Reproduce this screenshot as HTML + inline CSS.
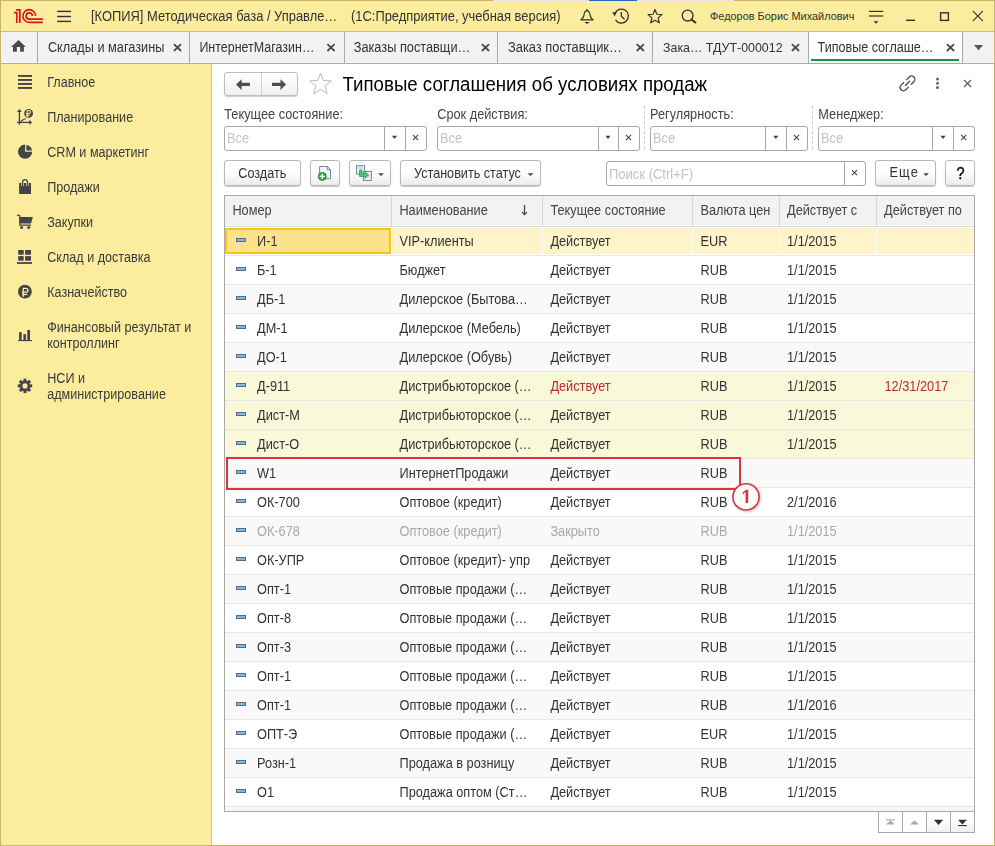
<!DOCTYPE html><html><head><meta charset="utf-8"><title>1C</title><style>
*{margin:0;padding:0;box-sizing:border-box}
html,body{width:995px;height:846px;overflow:hidden;background:#fff}
body{position:relative;font-family:"Liberation Sans",sans-serif}
.t{position:absolute;white-space:nowrap;line-height:1}
svg{position:absolute;overflow:visible}
</style></head><body><div style="position:absolute;left:0px;top:0px;width:995px;height:846px;background:#fbec9e"></div>
<div style="position:absolute;left:0px;top:0px;width:995px;height:1px;background:#c5b56b"></div>
<div style="position:absolute;left:493px;top:0px;width:241px;height:1px;background:#e3e3e3"></div>
<div style="position:absolute;left:589px;top:0px;width:48px;height:1px;background:#1a6cc4"></div>
<div style="position:absolute;left:0px;top:0px;width:1px;height:846px;background:#c5b56b"></div>
<div style="position:absolute;left:994px;top:0px;width:1px;height:846px;background:#c5b56b"></div>
<div style="position:absolute;left:0px;top:845px;width:995px;height:1px;background:#c5b56b"></div>
<div style="position:absolute;left:1px;top:31px;width:993px;height:1px;background:#cfbf72"></div>
<div style="position:absolute;left:1px;top:32px;width:993px;height:31px;background:#f2f2f2"></div>
<div style="position:absolute;left:1px;top:62px;width:993px;height:1px;background:#fafafa"></div>
<div style="position:absolute;left:1px;top:63px;width:993px;height:1px;background:#a9a9a9"></div>
<div style="position:absolute;left:37px;top:32px;width:1px;height:31px;background:#a9a9a9"></div>
<div style="position:absolute;left:189px;top:32px;width:1px;height:31px;background:#a9a9a9"></div>
<div style="position:absolute;left:344px;top:32px;width:1px;height:31px;background:#a9a9a9"></div>
<div style="position:absolute;left:497px;top:32px;width:1px;height:31px;background:#a9a9a9"></div>
<div style="position:absolute;left:652px;top:32px;width:1px;height:31px;background:#a9a9a9"></div>
<div style="position:absolute;left:808px;top:32px;width:1px;height:31px;background:#a9a9a9"></div>
<div style="position:absolute;left:962px;top:32px;width:1px;height:31px;background:#a9a9a9"></div>
<div style="position:absolute;left:809px;top:32px;width:153px;height:31px;background:#fff"></div>
<div style="position:absolute;left:811px;top:59px;width:148px;height:2px;background:#1a9641"></div>
<div style="position:absolute;left:1px;top:64px;width:210px;height:781px;background:#fbec9e"></div>
<div style="position:absolute;left:211px;top:64px;width:1px;height:781px;background:#d8c97e"></div>
<div style="position:absolute;left:212px;top:64px;width:782px;height:781px;background:#fff"></div>
<div class="t" style="left:91.00px;top:11.16px;font-size:12.92px;color:#333;transform:scaleY(1.1);transform-origin:0 10.94px;">[КОПИЯ] Методическая база / Управле…</div>
<div class="t" style="left:351.00px;top:11.16px;font-size:12.92px;color:#333;transform:scaleY(1.1);transform-origin:0 10.94px;">(1С:Предприятие, учебная версия)</div>
<div class="t" style="left:710.00px;top:10.95px;font-size:10.93px;color:#333;">Федоров Борис Михайлович</div>
<div class="t" style="left:47.90px;top:41.82px;font-size:12.74px;color:#333;transform:scaleY(1.1);transform-origin:0 10.78px;">Склады и магазины</div>
<div class="t" style="left:199.40px;top:42.04px;font-size:12.47px;color:#333;transform:scaleY(1.1);transform-origin:0 10.56px;">ИнтернетМагазин…</div>
<div class="t" style="left:353.70px;top:41.78px;font-size:12.78px;color:#333;transform:scaleY(1.1);transform-origin:0 10.82px;">Заказы поставщи…</div>
<div class="t" style="left:508.00px;top:41.71px;font-size:12.87px;color:#333;transform:scaleY(1.1);transform-origin:0 10.89px;">Заказ поставщик…</div>
<div class="t" style="left:663.00px;top:42.09px;font-size:12.41px;color:#333;transform:scaleY(1.1);transform-origin:0 10.51px;">Зака… ТДУТ-000012</div>
<div class="t" style="left:817.50px;top:41.94px;font-size:12.59px;color:#333;transform:scaleY(1.1);transform-origin:0 10.66px;">Типовые соглаше…</div>
<div class="t" style="left:47.20px;top:76.83px;font-size:12.6px;color:#3b3b3b;transform:scaleY(1.1);transform-origin:0 10.67px;">Главное</div>
<div class="t" style="left:47.20px;top:111.83px;font-size:12.6px;color:#3b3b3b;transform:scaleY(1.1);transform-origin:0 10.67px;">Планирование</div>
<div class="t" style="left:47.20px;top:146.83px;font-size:12.6px;color:#3b3b3b;transform:scaleY(1.1);transform-origin:0 10.67px;">CRM и маркетинг</div>
<div class="t" style="left:47.20px;top:181.83px;font-size:12.6px;color:#3b3b3b;transform:scaleY(1.1);transform-origin:0 10.67px;">Продажи</div>
<div class="t" style="left:47.20px;top:216.83px;font-size:12.6px;color:#3b3b3b;transform:scaleY(1.1);transform-origin:0 10.67px;">Закупки</div>
<div class="t" style="left:47.20px;top:251.83px;font-size:12.6px;color:#3b3b3b;transform:scaleY(1.1);transform-origin:0 10.67px;">Склад и доставка</div>
<div class="t" style="left:47.20px;top:286.83px;font-size:12.6px;color:#3b3b3b;transform:scaleY(1.1);transform-origin:0 10.67px;">Казначейство</div>
<div class="t" style="left:47.20px;top:322.23px;font-size:12.6px;color:#3b3b3b;transform:scaleY(1.1);transform-origin:0 10.67px;">Финансовый результат и</div>
<div class="t" style="left:47.20px;top:337.93px;font-size:12.6px;color:#3b3b3b;transform:scaleY(1.1);transform-origin:0 10.67px;">контроллинг</div>
<div class="t" style="left:47.20px;top:372.63px;font-size:12.6px;color:#3b3b3b;transform:scaleY(1.1);transform-origin:0 10.67px;">НСИ и</div>
<div class="t" style="left:47.20px;top:388.53px;font-size:12.6px;color:#3b3b3b;transform:scaleY(1.1);transform-origin:0 10.67px;">администрирование</div>
<div class="t" style="left:342.50px;top:75.70px;font-size:18.67px;color:#000;transform:scaleY(1.1);transform-origin:0 15.80px;">Типовые соглашения об условиях продаж</div>
<div class="t" style="left:224.30px;top:108.91px;font-size:12.75px;color:#444;transform:scaleY(1.1);transform-origin:0 10.79px;">Текущее состояние:</div>
<div class="t" style="left:437.20px;top:108.91px;font-size:12.75px;color:#444;transform:scaleY(1.1);transform-origin:0 10.79px;">Срок действия:</div>
<div class="t" style="left:650.00px;top:108.91px;font-size:12.75px;color:#444;transform:scaleY(1.1);transform-origin:0 10.79px;">Регулярность:</div>
<div class="t" style="left:818.30px;top:108.91px;font-size:12.75px;color:#444;transform:scaleY(1.1);transform-origin:0 10.79px;">Менеджер:</div>
<div style="position:absolute;left:224px;top:126px;width:203px;height:25px;background:#fff;border:1px solid #a8a8a8;border-radius:3px"></div>
<div style="position:absolute;left:384px;top:127px;width:1px;height:23px;background:#a8a8a8"></div>
<div style="position:absolute;left:405px;top:127px;width:1px;height:23px;background:#a8a8a8"></div>
<div class="t" style="left:227.00px;top:133.21px;font-size:12.75px;color:#c4c4c4;transform:scaleY(1.1);transform-origin:0 10.79px;">Все</div>
<div style="position:absolute;left:437px;top:126px;width:203px;height:25px;background:#fff;border:1px solid #a8a8a8;border-radius:3px"></div>
<div style="position:absolute;left:598px;top:127px;width:1px;height:23px;background:#a8a8a8"></div>
<div style="position:absolute;left:618px;top:127px;width:1px;height:23px;background:#a8a8a8"></div>
<div class="t" style="left:440.00px;top:133.21px;font-size:12.75px;color:#c4c4c4;transform:scaleY(1.1);transform-origin:0 10.79px;">Все</div>
<div style="position:absolute;left:650px;top:126px;width:158px;height:25px;background:#fff;border:1px solid #a8a8a8;border-radius:3px"></div>
<div style="position:absolute;left:765px;top:127px;width:1px;height:23px;background:#a8a8a8"></div>
<div style="position:absolute;left:786px;top:127px;width:1px;height:23px;background:#a8a8a8"></div>
<div class="t" style="left:653.00px;top:133.21px;font-size:12.75px;color:#c4c4c4;transform:scaleY(1.1);transform-origin:0 10.79px;">Все</div>
<div style="position:absolute;left:818px;top:126px;width:157px;height:25px;background:#fff;border:1px solid #a8a8a8;border-radius:3px"></div>
<div style="position:absolute;left:932px;top:127px;width:1px;height:23px;background:#a8a8a8"></div>
<div style="position:absolute;left:953px;top:127px;width:1px;height:23px;background:#a8a8a8"></div>
<div class="t" style="left:821.00px;top:133.21px;font-size:12.75px;color:#c4c4c4;transform:scaleY(1.1);transform-origin:0 10.79px;">Все</div>
<div style="position:absolute;left:644px;top:106px;width:1px;height:45px;background:repeating-linear-gradient(to bottom,#cdcdcd 0 3px,transparent 3px 5px)"></div>
<div style="position:absolute;left:812px;top:106px;width:1px;height:45px;background:repeating-linear-gradient(to bottom,#cdcdcd 0 3px,transparent 3px 5px)"></div>
<div style="position:absolute;left:224px;top:160px;width:77px;height:26px;background:linear-gradient(#fff 45%,#ececec);border:1px solid #b8b8b8;border-radius:3px;box-shadow:0 1px 1px rgba(0,0,0,.22)"></div>
<div class="t" style="left:238.30px;top:167.68px;font-size:12.66px;color:#333;transform:scaleY(1.1);transform-origin:0 10.72px;">Создать</div>
<div style="position:absolute;left:310px;top:160px;width:30px;height:26px;background:linear-gradient(#fff 45%,#ececec);border:1px solid #b8b8b8;border-radius:3px;box-shadow:0 1px 1px rgba(0,0,0,.22)"></div>
<div style="position:absolute;left:349px;top:160px;width:42px;height:26px;background:linear-gradient(#fff 45%,#ececec);border:1px solid #b8b8b8;border-radius:3px;box-shadow:0 1px 1px rgba(0,0,0,.22)"></div>
<div style="position:absolute;left:400px;top:160px;width:141px;height:26px;background:linear-gradient(#fff 45%,#ececec);border:1px solid #b8b8b8;border-radius:3px;box-shadow:0 1px 1px rgba(0,0,0,.22)"></div>
<div class="t" style="left:414.00px;top:167.70px;font-size:12.64px;color:#333;transform:scaleY(1.1);transform-origin:0 10.70px;">Установить статус</div>
<div style="position:absolute;left:606px;top:161px;width:260px;height:25px;background:#fff;border:1px solid #a8a8a8;border-radius:3px"></div>
<div style="position:absolute;left:844px;top:162px;width:1px;height:23px;background:#a8a8a8"></div>
<div class="t" style="left:609.00px;top:167.80px;font-size:13px;color:#c4c4c4;transform:scaleY(1.1);transform-origin:0 11.00px;">Поиск (Ctrl+F)</div>
<div style="position:absolute;left:875px;top:160px;width:61px;height:26px;background:linear-gradient(#fff 45%,#ececec);border:1px solid #b8b8b8;border-radius:3px;box-shadow:0 1px 1px rgba(0,0,0,.22)"></div>
<div class="t" style="left:889.40px;top:167.48px;font-size:12.9px;color:#333;transform:scaleY(1.1);transform-origin:0 10.92px;letter-spacing:1.1px">Еще</div>
<div style="position:absolute;left:945px;top:160px;width:30px;height:26px;background:linear-gradient(#fff 45%,#ececec);border:1px solid #b8b8b8;border-radius:3px;box-shadow:0 1px 1px rgba(0,0,0,.22)"></div>
<div class="t" style="left:956.40px;top:166.93px;font-size:14.5px;color:#111;transform:scaleY(1.1);transform-origin:0 12.27px;-webkit-text-stroke:0.45px #111">?</div>
<div style="position:absolute;left:224px;top:72px;width:74px;height:24px;background:linear-gradient(#fff,#f1f1f1);border:1px solid #bdbdbd;border-radius:3px;box-shadow:0 1px 1px rgba(0,0,0,.2)"></div>
<div style="position:absolute;left:261px;top:73px;width:1px;height:22px;background:#d0d0d0"></div>
<div style="position:absolute;left:224px;top:195px;width:751px;height:617px;background:#fff;border:1px solid #a9a9a9"></div>
<div style="position:absolute;left:225px;top:196px;width:749px;height:30px;background:#f2f2f2"></div>
<div style="position:absolute;left:225px;top:225px;width:749px;height:1px;background:#fafafa"></div>
<div style="position:absolute;left:225px;top:226px;width:749px;height:1px;background:#d8d8d8"></div>
<div style="position:absolute;left:391px;top:196px;width:1px;height:30px;background:#d6d6d6"></div>
<div style="position:absolute;left:542px;top:196px;width:1px;height:30px;background:#d6d6d6"></div>
<div style="position:absolute;left:692px;top:196px;width:1px;height:30px;background:#d6d6d6"></div>
<div style="position:absolute;left:779px;top:196px;width:1px;height:30px;background:#d6d6d6"></div>
<div style="position:absolute;left:876px;top:196px;width:1px;height:30px;background:#d6d6d6"></div>
<div class="t" style="left:232.40px;top:204.81px;font-size:12.75px;color:#444;transform:scaleY(1.1);transform-origin:0 10.79px;">Номер</div>
<div class="t" style="left:399.40px;top:204.81px;font-size:12.75px;color:#444;transform:scaleY(1.1);transform-origin:0 10.79px;">Наименование</div>
<div class="t" style="left:550.40px;top:204.81px;font-size:12.75px;color:#444;transform:scaleY(1.1);transform-origin:0 10.79px;">Текущее состояние</div>
<div class="t" style="left:700.40px;top:204.81px;font-size:12.75px;color:#444;transform:scaleY(1.1);transform-origin:0 10.79px;">Валюта цен</div>
<div class="t" style="left:787.00px;top:204.81px;font-size:12.75px;color:#444;transform:scaleY(1.1);transform-origin:0 10.79px;">Действует с</div>
<div class="t" style="left:884.10px;top:204.81px;font-size:12.75px;color:#444;transform:scaleY(1.1);transform-origin:0 10.79px;">Действует по</div>
<div style="position:absolute;left:225px;top:228px;width:749px;height:26px;background:#fff3c9"></div>
<div style="position:absolute;left:225px;top:255px;width:749px;height:1px;background:#e6e6e6"></div>
<div style="position:absolute;left:225px;top:228px;width:166px;height:26px;background:#fde28e;border:2px solid #fac611"></div>
<div style="position:absolute;left:391px;top:227px;width:1px;height:28px;background:#fff"></div>
<div style="position:absolute;left:542px;top:227px;width:1px;height:28px;background:#fff"></div>
<div style="position:absolute;left:692px;top:227px;width:1px;height:28px;background:#fff"></div>
<div style="position:absolute;left:779px;top:227px;width:1px;height:28px;background:#fff"></div>
<div style="position:absolute;left:876px;top:227px;width:1px;height:28px;background:#fff"></div>
<div style="position:absolute;left:236px;top:238px;width:10px;height:4px;background:#8db4dc;border:1px solid #4d6f8f"></div>
<div class="t" style="left:257.00px;top:235.81px;font-size:12.75px;color:#333;transform:scaleY(1.1);transform-origin:0 10.79px;">И-1</div>
<div class="t" style="left:399.50px;top:235.81px;font-size:12.75px;color:#333;transform:scaleY(1.1);transform-origin:0 10.79px;">VIP-клиенты</div>
<div class="t" style="left:550.40px;top:235.81px;font-size:12.75px;color:#333;transform:scaleY(1.1);transform-origin:0 10.79px;">Действует</div>
<div class="t" style="left:700.50px;top:235.81px;font-size:12.75px;color:#333;transform:scaleY(1.1);transform-origin:0 10.79px;">EUR</div>
<div class="t" style="left:787.00px;top:235.81px;font-size:12.75px;color:#333;transform:scaleY(1.1);transform-origin:0 10.79px;">1/1/2015</div>
<div style="position:absolute;left:225px;top:256px;width:749px;height:28px;background:#fff"></div>
<div style="position:absolute;left:225px;top:284px;width:749px;height:1px;background:#e6e6e6"></div>
<div style="position:absolute;left:236px;top:267px;width:10px;height:4px;background:#8db4dc;border:1px solid #4d6f8f"></div>
<div class="t" style="left:257.00px;top:264.81px;font-size:12.75px;color:#333;transform:scaleY(1.1);transform-origin:0 10.79px;">Б-1</div>
<div class="t" style="left:399.50px;top:264.81px;font-size:12.75px;color:#333;transform:scaleY(1.1);transform-origin:0 10.79px;">Бюджет</div>
<div class="t" style="left:550.40px;top:264.81px;font-size:12.75px;color:#333;transform:scaleY(1.1);transform-origin:0 10.79px;">Действует</div>
<div class="t" style="left:700.50px;top:264.81px;font-size:12.75px;color:#333;transform:scaleY(1.1);transform-origin:0 10.79px;">RUB</div>
<div class="t" style="left:787.00px;top:264.81px;font-size:12.75px;color:#333;transform:scaleY(1.1);transform-origin:0 10.79px;">1/1/2015</div>
<div style="position:absolute;left:225px;top:285px;width:749px;height:28px;background:#f9f9f9"></div>
<div style="position:absolute;left:225px;top:313px;width:749px;height:1px;background:#e6e6e6"></div>
<div style="position:absolute;left:236px;top:296px;width:10px;height:4px;background:#8db4dc;border:1px solid #4d6f8f"></div>
<div class="t" style="left:257.00px;top:293.81px;font-size:12.75px;color:#333;transform:scaleY(1.1);transform-origin:0 10.79px;">ДБ-1</div>
<div class="t" style="left:399.50px;top:293.81px;font-size:12.75px;color:#333;transform:scaleY(1.1);transform-origin:0 10.79px;">Дилерское (Бытова…</div>
<div class="t" style="left:550.40px;top:293.81px;font-size:12.75px;color:#333;transform:scaleY(1.1);transform-origin:0 10.79px;">Действует</div>
<div class="t" style="left:700.50px;top:293.81px;font-size:12.75px;color:#333;transform:scaleY(1.1);transform-origin:0 10.79px;">RUB</div>
<div class="t" style="left:787.00px;top:293.81px;font-size:12.75px;color:#333;transform:scaleY(1.1);transform-origin:0 10.79px;">1/1/2015</div>
<div style="position:absolute;left:225px;top:314px;width:749px;height:28px;background:#fff"></div>
<div style="position:absolute;left:225px;top:342px;width:749px;height:1px;background:#e6e6e6"></div>
<div style="position:absolute;left:236px;top:325px;width:10px;height:4px;background:#8db4dc;border:1px solid #4d6f8f"></div>
<div class="t" style="left:257.00px;top:322.81px;font-size:12.75px;color:#333;transform:scaleY(1.1);transform-origin:0 10.79px;">ДМ-1</div>
<div class="t" style="left:399.50px;top:322.81px;font-size:12.75px;color:#333;transform:scaleY(1.1);transform-origin:0 10.79px;">Дилерское (Мебель)</div>
<div class="t" style="left:550.40px;top:322.81px;font-size:12.75px;color:#333;transform:scaleY(1.1);transform-origin:0 10.79px;">Действует</div>
<div class="t" style="left:700.50px;top:322.81px;font-size:12.75px;color:#333;transform:scaleY(1.1);transform-origin:0 10.79px;">RUB</div>
<div class="t" style="left:787.00px;top:322.81px;font-size:12.75px;color:#333;transform:scaleY(1.1);transform-origin:0 10.79px;">1/1/2015</div>
<div style="position:absolute;left:225px;top:343px;width:749px;height:28px;background:#f9f9f9"></div>
<div style="position:absolute;left:225px;top:371px;width:749px;height:1px;background:#e6e6e6"></div>
<div style="position:absolute;left:236px;top:354px;width:10px;height:4px;background:#8db4dc;border:1px solid #4d6f8f"></div>
<div class="t" style="left:257.00px;top:351.81px;font-size:12.75px;color:#333;transform:scaleY(1.1);transform-origin:0 10.79px;">ДО-1</div>
<div class="t" style="left:399.50px;top:351.81px;font-size:12.75px;color:#333;transform:scaleY(1.1);transform-origin:0 10.79px;">Дилерское (Обувь)</div>
<div class="t" style="left:550.40px;top:351.81px;font-size:12.75px;color:#333;transform:scaleY(1.1);transform-origin:0 10.79px;">Действует</div>
<div class="t" style="left:700.50px;top:351.81px;font-size:12.75px;color:#333;transform:scaleY(1.1);transform-origin:0 10.79px;">RUB</div>
<div class="t" style="left:787.00px;top:351.81px;font-size:12.75px;color:#333;transform:scaleY(1.1);transform-origin:0 10.79px;">1/1/2015</div>
<div style="position:absolute;left:225px;top:372px;width:749px;height:28px;background:#f9f8d9"></div>
<div style="position:absolute;left:225px;top:400px;width:749px;height:1px;background:#e6e6e6"></div>
<div style="position:absolute;left:236px;top:383px;width:10px;height:4px;background:#8db4dc;border:1px solid #4d6f8f"></div>
<div class="t" style="left:257.00px;top:380.81px;font-size:12.75px;color:#333;transform:scaleY(1.1);transform-origin:0 10.79px;">Д-911</div>
<div class="t" style="left:399.50px;top:380.81px;font-size:12.75px;color:#333;transform:scaleY(1.1);transform-origin:0 10.79px;">Дистрибьюторское (…</div>
<div class="t" style="left:550.40px;top:380.81px;font-size:12.75px;color:#c0282d;transform:scaleY(1.1);transform-origin:0 10.79px;">Действует</div>
<div class="t" style="left:700.50px;top:380.81px;font-size:12.75px;color:#333;transform:scaleY(1.1);transform-origin:0 10.79px;">RUB</div>
<div class="t" style="left:787.00px;top:380.81px;font-size:12.75px;color:#333;transform:scaleY(1.1);transform-origin:0 10.79px;">1/1/2015</div>
<div class="t" style="left:884.50px;top:380.81px;font-size:12.75px;color:#c0282d;transform:scaleY(1.1);transform-origin:0 10.79px;">12/31/2017</div>
<div style="position:absolute;left:225px;top:401px;width:749px;height:28px;background:#f9f8d9"></div>
<div style="position:absolute;left:225px;top:429px;width:749px;height:1px;background:#e6e6e6"></div>
<div style="position:absolute;left:236px;top:412px;width:10px;height:4px;background:#8db4dc;border:1px solid #4d6f8f"></div>
<div class="t" style="left:257.00px;top:409.81px;font-size:12.75px;color:#333;transform:scaleY(1.1);transform-origin:0 10.79px;">Дист-М</div>
<div class="t" style="left:399.50px;top:409.81px;font-size:12.75px;color:#333;transform:scaleY(1.1);transform-origin:0 10.79px;">Дистрибьюторское (…</div>
<div class="t" style="left:550.40px;top:409.81px;font-size:12.75px;color:#333;transform:scaleY(1.1);transform-origin:0 10.79px;">Действует</div>
<div class="t" style="left:700.50px;top:409.81px;font-size:12.75px;color:#333;transform:scaleY(1.1);transform-origin:0 10.79px;">RUB</div>
<div class="t" style="left:787.00px;top:409.81px;font-size:12.75px;color:#333;transform:scaleY(1.1);transform-origin:0 10.79px;">1/1/2015</div>
<div style="position:absolute;left:225px;top:430px;width:749px;height:28px;background:#f9f8d9"></div>
<div style="position:absolute;left:225px;top:458px;width:749px;height:1px;background:#e6e6e6"></div>
<div style="position:absolute;left:236px;top:441px;width:10px;height:4px;background:#8db4dc;border:1px solid #4d6f8f"></div>
<div class="t" style="left:257.00px;top:438.81px;font-size:12.75px;color:#333;transform:scaleY(1.1);transform-origin:0 10.79px;">Дист-О</div>
<div class="t" style="left:399.50px;top:438.81px;font-size:12.75px;color:#333;transform:scaleY(1.1);transform-origin:0 10.79px;">Дистрибьюторское (…</div>
<div class="t" style="left:550.40px;top:438.81px;font-size:12.75px;color:#333;transform:scaleY(1.1);transform-origin:0 10.79px;">Действует</div>
<div class="t" style="left:700.50px;top:438.81px;font-size:12.75px;color:#333;transform:scaleY(1.1);transform-origin:0 10.79px;">RUB</div>
<div class="t" style="left:787.00px;top:438.81px;font-size:12.75px;color:#333;transform:scaleY(1.1);transform-origin:0 10.79px;">1/1/2015</div>
<div style="position:absolute;left:225px;top:459px;width:749px;height:28px;background:#f9f9f9"></div>
<div style="position:absolute;left:225px;top:487px;width:749px;height:1px;background:#e6e6e6"></div>
<div style="position:absolute;left:236px;top:470px;width:10px;height:4px;background:#8db4dc;border:1px solid #4d6f8f"></div>
<div class="t" style="left:257.00px;top:467.81px;font-size:12.75px;color:#333;transform:scaleY(1.1);transform-origin:0 10.79px;">W1</div>
<div class="t" style="left:399.50px;top:467.81px;font-size:12.75px;color:#333;transform:scaleY(1.1);transform-origin:0 10.79px;">ИнтернетПродажи</div>
<div class="t" style="left:550.40px;top:467.81px;font-size:12.75px;color:#333;transform:scaleY(1.1);transform-origin:0 10.79px;">Действует</div>
<div class="t" style="left:700.50px;top:467.81px;font-size:12.75px;color:#333;transform:scaleY(1.1);transform-origin:0 10.79px;">RUB</div>
<div style="position:absolute;left:225px;top:488px;width:749px;height:28px;background:#fff"></div>
<div style="position:absolute;left:225px;top:516px;width:749px;height:1px;background:#e6e6e6"></div>
<div style="position:absolute;left:236px;top:499px;width:10px;height:4px;background:#8db4dc;border:1px solid #4d6f8f"></div>
<div class="t" style="left:257.00px;top:496.81px;font-size:12.75px;color:#333;transform:scaleY(1.1);transform-origin:0 10.79px;">ОК-700</div>
<div class="t" style="left:399.50px;top:496.81px;font-size:12.75px;color:#333;transform:scaleY(1.1);transform-origin:0 10.79px;">Оптовое (кредит)</div>
<div class="t" style="left:550.40px;top:496.81px;font-size:12.75px;color:#333;transform:scaleY(1.1);transform-origin:0 10.79px;">Действует</div>
<div class="t" style="left:700.50px;top:496.81px;font-size:12.75px;color:#333;transform:scaleY(1.1);transform-origin:0 10.79px;">RUB</div>
<div class="t" style="left:787.00px;top:496.81px;font-size:12.75px;color:#333;transform:scaleY(1.1);transform-origin:0 10.79px;">2/1/2016</div>
<div style="position:absolute;left:225px;top:517px;width:749px;height:28px;background:#f9f9f9"></div>
<div style="position:absolute;left:225px;top:545px;width:749px;height:1px;background:#e6e6e6"></div>
<div style="position:absolute;left:236px;top:528px;width:10px;height:4px;background:#8db4dc;border:1px solid #4d6f8f"></div>
<div class="t" style="left:257.00px;top:525.81px;font-size:12.75px;color:#a8a8a8;transform:scaleY(1.1);transform-origin:0 10.79px;">ОК-678</div>
<div class="t" style="left:399.50px;top:525.81px;font-size:12.75px;color:#a8a8a8;transform:scaleY(1.1);transform-origin:0 10.79px;">Оптовое (кредит)</div>
<div class="t" style="left:550.40px;top:525.81px;font-size:12.75px;color:#a8a8a8;transform:scaleY(1.1);transform-origin:0 10.79px;">Закрыто</div>
<div class="t" style="left:700.50px;top:525.81px;font-size:12.75px;color:#a8a8a8;transform:scaleY(1.1);transform-origin:0 10.79px;">RUB</div>
<div class="t" style="left:787.00px;top:525.81px;font-size:12.75px;color:#a8a8a8;transform:scaleY(1.1);transform-origin:0 10.79px;">1/1/2015</div>
<div style="position:absolute;left:225px;top:546px;width:749px;height:28px;background:#fff"></div>
<div style="position:absolute;left:225px;top:574px;width:749px;height:1px;background:#e6e6e6"></div>
<div style="position:absolute;left:236px;top:557px;width:10px;height:4px;background:#8db4dc;border:1px solid #4d6f8f"></div>
<div class="t" style="left:257.00px;top:554.81px;font-size:12.75px;color:#333;transform:scaleY(1.1);transform-origin:0 10.79px;">ОК-УПР</div>
<div class="t" style="left:399.50px;top:554.81px;font-size:12.75px;color:#333;transform:scaleY(1.1);transform-origin:0 10.79px;">Оптовое (кредит)- упр</div>
<div class="t" style="left:550.40px;top:554.81px;font-size:12.75px;color:#333;transform:scaleY(1.1);transform-origin:0 10.79px;">Действует</div>
<div class="t" style="left:700.50px;top:554.81px;font-size:12.75px;color:#333;transform:scaleY(1.1);transform-origin:0 10.79px;">RUB</div>
<div class="t" style="left:787.00px;top:554.81px;font-size:12.75px;color:#333;transform:scaleY(1.1);transform-origin:0 10.79px;">1/1/2015</div>
<div style="position:absolute;left:225px;top:575px;width:749px;height:28px;background:#f9f9f9"></div>
<div style="position:absolute;left:225px;top:603px;width:749px;height:1px;background:#e6e6e6"></div>
<div style="position:absolute;left:236px;top:586px;width:10px;height:4px;background:#8db4dc;border:1px solid #4d6f8f"></div>
<div class="t" style="left:257.00px;top:583.81px;font-size:12.75px;color:#333;transform:scaleY(1.1);transform-origin:0 10.79px;">Опт-1</div>
<div class="t" style="left:399.50px;top:583.81px;font-size:12.75px;color:#333;transform:scaleY(1.1);transform-origin:0 10.79px;">Оптовые продажи (…</div>
<div class="t" style="left:550.40px;top:583.81px;font-size:12.75px;color:#333;transform:scaleY(1.1);transform-origin:0 10.79px;">Действует</div>
<div class="t" style="left:700.50px;top:583.81px;font-size:12.75px;color:#333;transform:scaleY(1.1);transform-origin:0 10.79px;">RUB</div>
<div class="t" style="left:787.00px;top:583.81px;font-size:12.75px;color:#333;transform:scaleY(1.1);transform-origin:0 10.79px;">1/1/2015</div>
<div style="position:absolute;left:225px;top:604px;width:749px;height:28px;background:#fff"></div>
<div style="position:absolute;left:225px;top:632px;width:749px;height:1px;background:#e6e6e6"></div>
<div style="position:absolute;left:236px;top:615px;width:10px;height:4px;background:#8db4dc;border:1px solid #4d6f8f"></div>
<div class="t" style="left:257.00px;top:612.81px;font-size:12.75px;color:#333;transform:scaleY(1.1);transform-origin:0 10.79px;">Опт-8</div>
<div class="t" style="left:399.50px;top:612.81px;font-size:12.75px;color:#333;transform:scaleY(1.1);transform-origin:0 10.79px;">Оптовые продажи (…</div>
<div class="t" style="left:550.40px;top:612.81px;font-size:12.75px;color:#333;transform:scaleY(1.1);transform-origin:0 10.79px;">Действует</div>
<div class="t" style="left:700.50px;top:612.81px;font-size:12.75px;color:#333;transform:scaleY(1.1);transform-origin:0 10.79px;">RUB</div>
<div class="t" style="left:787.00px;top:612.81px;font-size:12.75px;color:#333;transform:scaleY(1.1);transform-origin:0 10.79px;">1/1/2015</div>
<div style="position:absolute;left:225px;top:633px;width:749px;height:28px;background:#f9f9f9"></div>
<div style="position:absolute;left:225px;top:661px;width:749px;height:1px;background:#e6e6e6"></div>
<div style="position:absolute;left:236px;top:644px;width:10px;height:4px;background:#8db4dc;border:1px solid #4d6f8f"></div>
<div class="t" style="left:257.00px;top:641.81px;font-size:12.75px;color:#333;transform:scaleY(1.1);transform-origin:0 10.79px;">Опт-3</div>
<div class="t" style="left:399.50px;top:641.81px;font-size:12.75px;color:#333;transform:scaleY(1.1);transform-origin:0 10.79px;">Оптовые продажи (…</div>
<div class="t" style="left:550.40px;top:641.81px;font-size:12.75px;color:#333;transform:scaleY(1.1);transform-origin:0 10.79px;">Действует</div>
<div class="t" style="left:700.50px;top:641.81px;font-size:12.75px;color:#333;transform:scaleY(1.1);transform-origin:0 10.79px;">RUB</div>
<div class="t" style="left:787.00px;top:641.81px;font-size:12.75px;color:#333;transform:scaleY(1.1);transform-origin:0 10.79px;">1/1/2015</div>
<div style="position:absolute;left:225px;top:662px;width:749px;height:28px;background:#fff"></div>
<div style="position:absolute;left:225px;top:690px;width:749px;height:1px;background:#e6e6e6"></div>
<div style="position:absolute;left:236px;top:673px;width:10px;height:4px;background:#8db4dc;border:1px solid #4d6f8f"></div>
<div class="t" style="left:257.00px;top:670.81px;font-size:12.75px;color:#333;transform:scaleY(1.1);transform-origin:0 10.79px;">Опт-1</div>
<div class="t" style="left:399.50px;top:670.81px;font-size:12.75px;color:#333;transform:scaleY(1.1);transform-origin:0 10.79px;">Оптовые продажи (…</div>
<div class="t" style="left:550.40px;top:670.81px;font-size:12.75px;color:#333;transform:scaleY(1.1);transform-origin:0 10.79px;">Действует</div>
<div class="t" style="left:700.50px;top:670.81px;font-size:12.75px;color:#333;transform:scaleY(1.1);transform-origin:0 10.79px;">RUB</div>
<div class="t" style="left:787.00px;top:670.81px;font-size:12.75px;color:#333;transform:scaleY(1.1);transform-origin:0 10.79px;">1/1/2015</div>
<div style="position:absolute;left:225px;top:691px;width:749px;height:28px;background:#f9f9f9"></div>
<div style="position:absolute;left:225px;top:719px;width:749px;height:1px;background:#e6e6e6"></div>
<div style="position:absolute;left:236px;top:702px;width:10px;height:4px;background:#8db4dc;border:1px solid #4d6f8f"></div>
<div class="t" style="left:257.00px;top:699.81px;font-size:12.75px;color:#333;transform:scaleY(1.1);transform-origin:0 10.79px;">Опт-1</div>
<div class="t" style="left:399.50px;top:699.81px;font-size:12.75px;color:#333;transform:scaleY(1.1);transform-origin:0 10.79px;">Оптовые продажи (…</div>
<div class="t" style="left:550.40px;top:699.81px;font-size:12.75px;color:#333;transform:scaleY(1.1);transform-origin:0 10.79px;">Действует</div>
<div class="t" style="left:700.50px;top:699.81px;font-size:12.75px;color:#333;transform:scaleY(1.1);transform-origin:0 10.79px;">RUB</div>
<div class="t" style="left:787.00px;top:699.81px;font-size:12.75px;color:#333;transform:scaleY(1.1);transform-origin:0 10.79px;">1/1/2016</div>
<div style="position:absolute;left:225px;top:720px;width:749px;height:28px;background:#fff"></div>
<div style="position:absolute;left:225px;top:748px;width:749px;height:1px;background:#e6e6e6"></div>
<div style="position:absolute;left:236px;top:731px;width:10px;height:4px;background:#8db4dc;border:1px solid #4d6f8f"></div>
<div class="t" style="left:257.00px;top:728.81px;font-size:12.75px;color:#333;transform:scaleY(1.1);transform-origin:0 10.79px;">ОПТ-Э</div>
<div class="t" style="left:399.50px;top:728.81px;font-size:12.75px;color:#333;transform:scaleY(1.1);transform-origin:0 10.79px;">Оптовые продажи (…</div>
<div class="t" style="left:550.40px;top:728.81px;font-size:12.75px;color:#333;transform:scaleY(1.1);transform-origin:0 10.79px;">Действует</div>
<div class="t" style="left:700.50px;top:728.81px;font-size:12.75px;color:#333;transform:scaleY(1.1);transform-origin:0 10.79px;">EUR</div>
<div class="t" style="left:787.00px;top:728.81px;font-size:12.75px;color:#333;transform:scaleY(1.1);transform-origin:0 10.79px;">1/1/2015</div>
<div style="position:absolute;left:225px;top:749px;width:749px;height:28px;background:#f9f9f9"></div>
<div style="position:absolute;left:225px;top:777px;width:749px;height:1px;background:#e6e6e6"></div>
<div style="position:absolute;left:236px;top:760px;width:10px;height:4px;background:#8db4dc;border:1px solid #4d6f8f"></div>
<div class="t" style="left:257.00px;top:757.81px;font-size:12.75px;color:#333;transform:scaleY(1.1);transform-origin:0 10.79px;">Розн-1</div>
<div class="t" style="left:399.50px;top:757.81px;font-size:12.75px;color:#333;transform:scaleY(1.1);transform-origin:0 10.79px;">Продажа в розницу</div>
<div class="t" style="left:550.40px;top:757.81px;font-size:12.75px;color:#333;transform:scaleY(1.1);transform-origin:0 10.79px;">Действует</div>
<div class="t" style="left:700.50px;top:757.81px;font-size:12.75px;color:#333;transform:scaleY(1.1);transform-origin:0 10.79px;">RUB</div>
<div class="t" style="left:787.00px;top:757.81px;font-size:12.75px;color:#333;transform:scaleY(1.1);transform-origin:0 10.79px;">1/1/2015</div>
<div style="position:absolute;left:225px;top:778px;width:749px;height:28px;background:#fff"></div>
<div style="position:absolute;left:225px;top:806px;width:749px;height:1px;background:#e6e6e6"></div>
<div style="position:absolute;left:236px;top:789px;width:10px;height:4px;background:#8db4dc;border:1px solid #4d6f8f"></div>
<div class="t" style="left:257.00px;top:786.81px;font-size:12.75px;color:#333;transform:scaleY(1.1);transform-origin:0 10.79px;">О1</div>
<div class="t" style="left:399.50px;top:786.81px;font-size:12.75px;color:#333;transform:scaleY(1.1);transform-origin:0 10.79px;">Продажа оптом (Ст…</div>
<div class="t" style="left:550.40px;top:786.81px;font-size:12.75px;color:#333;transform:scaleY(1.1);transform-origin:0 10.79px;">Действует</div>
<div class="t" style="left:700.50px;top:786.81px;font-size:12.75px;color:#333;transform:scaleY(1.1);transform-origin:0 10.79px;">RUB</div>
<div class="t" style="left:787.00px;top:786.81px;font-size:12.75px;color:#333;transform:scaleY(1.1);transform-origin:0 10.79px;">1/1/2015</div>
<div style="position:absolute;left:878px;top:811px;width:97px;height:22px;background:#fff;border:1px solid #a9a9a9"></div>
<div style="position:absolute;left:902px;top:812px;width:1px;height:20px;background:#a9a9a9"></div>
<div style="position:absolute;left:926px;top:812px;width:1px;height:20px;background:#a9a9a9"></div>
<div style="position:absolute;left:950px;top:812px;width:1px;height:20px;background:#a9a9a9"></div>
<div style="position:absolute;left:225px;top:807px;width:749px;height:4px;background:#f6f6f6"></div>
<div style="position:absolute;left:927px;top:812px;width:23px;height:20px;background:linear-gradient(#fff 40%,#f0f0f0)"></div>
<div style="position:absolute;left:951px;top:812px;width:23px;height:20px;background:linear-gradient(#fff 40%,#f0f0f0)"></div>
<div style="position:absolute;left:226px;top:457px;width:515px;height:33px;border:2px solid #d9343c"></div>
<svg width="995" height="846" style="position:absolute;left:0;top:0"><defs><filter id="sh" x="-30%" y="-30%" width="160%" height="160%"><feDropShadow dx="0.8" dy="1" stdDeviation="0.9" flood-color="#000" flood-opacity="0.25"/></filter></defs><circle cx="746" cy="496.9" r="13.1" fill="#fff" stroke="#d9343c" stroke-width="1.6" filter="url(#sh)"/><rect x="745.6" y="489.9" width="2.6" height="13.1" fill="#d9343c"/><polygon fill="#d9343c" points="745.8,489.9 748,489.9 742.7,494.5 742.7,492.4"/></svg>
<svg width="995" height="846" style="position:absolute;left:0;top:0"><g fill="#d7141d"><polygon points="16.1,9 20.7,9 20.7,23.1 18.9,23.1 18.9,10.7 16.1,10.7"/><polygon points="14,11.7 17.6,11.7 17.6,23.1 16,23.1 16,13.4 14,13.4"/></g><g fill="none" stroke="#d7141d" stroke-width="1.6"><path d="M35.6 16 A6.35 6.35 0 1 0 29.2 22.35 L42.9 22.35"/><path d="M32.4 16 A3.15 3.15 0 1 0 29.2 19.15 L42.9 19.15"/></g><g stroke="#333" stroke-width="1.4"><line x1="57.2" y1="11.4" x2="71" y2="11.4"/><line x1="57.2" y1="16.5" x2="71" y2="16.5"/><line x1="57.2" y1="21.4" x2="71" y2="21.4"/></g><g fill="none" stroke="#333" stroke-width="1.2" stroke-linejoin="round"><path d="M587 10.9 C584.9 10.9 584.3 12.3 584.1 14.6 C583.8 17.4 582.6 18.7 580.8 19.9 L593.2 19.9 C591.4 18.7 590.2 17.4 589.9 14.6 C589.7 12.3 589.1 10.9 587 10.9 Z"/></g><polygon fill="#333" points="584.3,22 589.7,22 587,23.9"/><circle cx="587" cy="9.9" r="0.9" fill="#333"/><g fill="none" stroke="#333" stroke-width="1.3"><path d="M614.9 13.5 A7 7 0 1 1 615.5 19.8"/><path d="M621.3 12 L621.3 16.2 L624.5 19.3"/></g><polygon fill="#333" points="612.2,12.6 616.8,12 614.8,16.2"/><polygon fill="none" stroke="#333" stroke-width="1.2" stroke-linejoin="round" points="655.00,9.60 656.94,14.23 661.94,14.64 658.14,17.92 659.29,22.81 655.00,20.20 650.71,22.81 651.86,17.92 648.06,14.64 653.06,14.23"/><g fill="none" stroke="#333" stroke-width="1.3"><circle cx="687.6" cy="15.6" r="5.4"/></g><line x1="691.5" y1="19.5" x2="696" y2="23" stroke="#333" stroke-width="2.2"/><g stroke="#333" stroke-width="1.2"><line x1="869" y1="11.4" x2="883.3" y2="11.4"/><line x1="869" y1="16" x2="883.3" y2="16"/></g><polygon fill="#333" points="873.6,21.2 878.4,21.2 876,23.8"/><line x1="906" y1="20.3" x2="915" y2="20.3" stroke="#333" stroke-width="1.4"/><rect x="940.6" y="12.8" width="7.8" height="7.6" fill="none" stroke="#333" stroke-width="1.4"/><g stroke="#333" stroke-width="1.2"><line x1="973" y1="11.1" x2="982.8" y2="20.9"/><line x1="982.8" y1="11.1" x2="973" y2="20.9"/></g><polygon fill="#ffffff" points="18.5,41 11,47.9 13,47.9 13,52.7 16.9,52.7 16.9,48 20.1,48 20.1,52.7 23.9,52.7 23.9,47.9 25.9,47.9"/><polygon fill="#4a4a4a" points="18.5,40 11,46.9 13,46.9 13,51.7 16.9,51.7 16.9,47 20.1,47 20.1,51.7 23.9,51.7 23.9,46.9 25.9,46.9"/><g stroke="#4a4a4a" stroke-width="1.8" stroke-linecap="round"><line x1="174.4" y1="44.6" x2="180.6" y2="50.5"/><line x1="180.6" y1="44.6" x2="174.4" y2="50.5"/></g><g stroke="#4a4a4a" stroke-width="1.8" stroke-linecap="round"><line x1="327.9" y1="44.6" x2="334.1" y2="50.5"/><line x1="334.1" y1="44.6" x2="327.9" y2="50.5"/></g><g stroke="#4a4a4a" stroke-width="1.8" stroke-linecap="round"><line x1="482.4" y1="44.6" x2="488.6" y2="50.5"/><line x1="488.6" y1="44.6" x2="482.4" y2="50.5"/></g><g stroke="#4a4a4a" stroke-width="1.8" stroke-linecap="round"><line x1="637.1999999999999" y1="44.6" x2="643.4" y2="50.5"/><line x1="643.4" y1="44.6" x2="637.1999999999999" y2="50.5"/></g><g stroke="#4a4a4a" stroke-width="1.8" stroke-linecap="round"><line x1="792.4" y1="44.6" x2="798.6" y2="50.5"/><line x1="798.6" y1="44.6" x2="792.4" y2="50.5"/></g><g stroke="#4a4a4a" stroke-width="1.8" stroke-linecap="round"><line x1="947.4" y1="44.6" x2="953.6" y2="50.5"/><line x1="953.6" y1="44.6" x2="947.4" y2="50.5"/></g><polygon fill="#555" points="974,45 983,45 978.5,50.2"/><rect x="18" y="75" width="14" height="1.9" fill="#43454a"/><rect x="18" y="79" width="14" height="1.9" fill="#43454a"/><rect x="18" y="83" width="14" height="1.9" fill="#43454a"/><rect x="18" y="87" width="14" height="1.9" fill="#43454a"/><g stroke="#43454a" stroke-width="1.3" fill="none"><line x1="19.4" y1="111" x2="19.4" y2="124.9"/><line x1="17.1" y1="122.4" x2="30" y2="122.4"/></g><path d="M20.2 121.2 L21.6 121.2 L21.6 120.4 L22.9 120.4 L22.9 119.6 L24.1 119.6 L24.1 118.8 L25.8 118.8" fill="none" stroke="#43454a" stroke-width="1"/><polygon fill="#43454a" points="19.4,109 16.9,112 21.9,112"/><polygon fill="#43454a" points="32.2,122.4 29.2,120 29.2,124.8"/><circle cx="28.6" cy="113.4" r="4.4" fill="#43454a"/><g stroke="#fbec9e" stroke-width="1.1" fill="none"><path d="M27.3 117.2 L27.3 110.5 L28.9 110.5 A1.5 1.5 0 0 1 28.9 113.5 L25.9 113.5"/><line x1="25.9" y1="115.3" x2="29.8" y2="115.3"/></g><path fill="#43454a" d="M25.1 144.6 L25.1 151.7 L32.2 151.7 A7.1 7.1 0 1 1 25.1 144.6 Z"/><path fill="#43454a" d="M26.3 144.9 A6.2 6.2 0 0 1 31.9 150.5 L26.3 150.5 Z"/><rect x="19.1" y="183" width="11.9" height="11" fill="#43454a"/><path d="M22.6 186 L22.6 182 A2.4 2.4 0 0 1 27.4 182 L27.4 186" fill="none" stroke="#fbec9e" stroke-width="2.6"/><path d="M22.6 186 L22.6 182 A2.4 2.4 0 0 1 27.4 182 L27.4 186" fill="none" stroke="#43454a" stroke-width="1.3"/><path fill="#43454a" d="M17 214.8 L20.2 214.8 L20.4 217 L32.9 217 L31 223.5 L20.4 223.5 L20.4 224.6 L31 224.6 L31 225.8 L19.1 225.8 L19.1 216 L17 216 Z"/><circle cx="21.7" cy="227.4" r="1.5" fill="#43454a"/><circle cx="28.7" cy="227.4" r="1.5" fill="#43454a"/><g fill="#43454a"><rect x="18.2" y="250" width="5.5" height="4.7"/><rect x="25.1" y="250" width="5.9" height="4.7"/><rect x="18.2" y="256.1" width="5.5" height="4.6"/><rect x="25.1" y="256.1" width="5.9" height="4.6"/><rect x="17" y="262.1" width="15" height="1.8"/></g><circle cx="24.9" cy="291.7" r="6.9" fill="#43454a"/><g stroke="#fbec9e" stroke-width="1.3" fill="none"><path d="M23.3 296.7 L23.3 288.4 L26 288.4 A1.9 1.9 0 0 1 26 292.2 L21.9 292.2"/><line x1="21.9" y1="294.5" x2="27.2" y2="294.5"/></g><g fill="#43454a"><rect x="19.1" y="332.1" width="2.6" height="8.2"/><rect x="23.4" y="334.2" width="2.6" height="6.1"/><rect x="27.3" y="330" width="2.7" height="10.3"/><rect x="18" y="340" width="14" height="1.1"/></g><g transform="translate(25,385.9)" fill="#43454a"><rect x="-1.5" y="-7.2" width="3" height="3" transform="rotate(0)"/><rect x="-1.5" y="-7.2" width="3" height="3" transform="rotate(45)"/><rect x="-1.5" y="-7.2" width="3" height="3" transform="rotate(90)"/><rect x="-1.5" y="-7.2" width="3" height="3" transform="rotate(135)"/><rect x="-1.5" y="-7.2" width="3" height="3" transform="rotate(180)"/><rect x="-1.5" y="-7.2" width="3" height="3" transform="rotate(225)"/><rect x="-1.5" y="-7.2" width="3" height="3" transform="rotate(270)"/><rect x="-1.5" y="-7.2" width="3" height="3" transform="rotate(315)"/><circle r="5.3" fill="#43454a"/><circle r="2.6" fill="#fbec9e"/></g><polygon fill="#4d4d4d" points="236,84.4 241.6,79.3 241.6,82.8 249.9,82.8 249.9,86 241.6,86 241.6,90"/><polygon fill="#4d4d4d" points="286.1,84.4 280.5,79.3 280.5,82.8 272,82.8 272,86 280.5,86 280.5,90"/><polygon fill="none" stroke="#b4bcc6" stroke-width="1" stroke-linejoin="miter" points="320.50,73.00 323.32,80.52 331.34,80.88 325.07,85.88 327.20,93.62 320.50,89.20 313.80,93.62 315.93,85.88 309.66,80.88 317.68,80.52"/><g transform="translate(907.5,83.4) rotate(-45)" fill="none" stroke="#4a4a4a" stroke-width="1.3" stroke-linecap="round"><path d="M-2 -3.3 L-5.7 -3.3 A3.3 3.3 0 0 0 -5.7 3.3 L-2 3.3"/><path d="M2 -3.3 L5.7 -3.3 A3.3 3.3 0 0 1 5.7 3.3 L2 3.3"/><line x1="-2.9" y1="0" x2="3" y2="0"/></g><g fill="#666"><circle cx="937.5" cy="79" r="1.5"/><circle cx="937.5" cy="83.3" r="1.5"/><circle cx="937.5" cy="87.5" r="1.5"/></g><g stroke="#555" stroke-width="1.1"><line x1="964" y1="80" x2="971" y2="87"/><line x1="971" y1="80" x2="964" y2="87"/></g><polygon fill="#444" points="391.9,135.7 397.1,135.7 394.5,138.9"/><g stroke="#444" stroke-width="1.1"><line x1="412.9" y1="134.9" x2="418.1" y2="140.1"/><line x1="418.1" y1="134.9" x2="412.9" y2="140.1"/></g><polygon fill="#444" points="605.4,135.7 610.6,135.7 608,138.9"/><g stroke="#444" stroke-width="1.1"><line x1="625.9" y1="134.9" x2="631.1" y2="140.1"/><line x1="631.1" y1="134.9" x2="625.9" y2="140.1"/></g><polygon fill="#444" points="773.1999999999999,135.7 778.4,135.7 775.8,138.9"/><g stroke="#444" stroke-width="1.1"><line x1="793.9" y1="134.9" x2="799.1" y2="140.1"/><line x1="799.1" y1="134.9" x2="793.9" y2="140.1"/></g><polygon fill="#444" points="940.4,135.7 945.6,135.7 943,138.9"/><g stroke="#444" stroke-width="1.1"><line x1="961.1" y1="134.9" x2="966.3000000000001" y2="140.1"/><line x1="966.3000000000001" y1="134.9" x2="961.1" y2="140.1"/></g><g stroke="#444" stroke-width="1.1"><line x1="852" y1="170.1" x2="857" y2="175.1"/><line x1="857" y1="170.1" x2="852" y2="175.1"/></g><polygon fill="#444" points="378.2,173.3 383.8,173.3 381,176.10000000000002"/><polygon fill="#444" points="527.7,173.2 533.3,173.2 530.5,176.0"/><polygon fill="#444" points="923.3000000000001,173.2 928.9,173.2 926.1,176.0"/><path d="M319.6 166.5 L327.3 166.5 L330.5 169.7 L330.5 178.7 L319.6 178.7 Z" fill="#f4f7fa" stroke="#6f8399" stroke-width="1"/><path d="M327.3 166.5 L327.3 169.7 L330.5 169.7" fill="none" stroke="#6f8399" stroke-width="1"/><circle cx="322.3" cy="176.4" r="4.5" fill="#2c9a3c"/><g stroke="#fff" stroke-width="1.5"><line x1="319.6" y1="176.4" x2="325" y2="176.4"/><line x1="322.3" y1="173.7" x2="322.3" y2="179.1"/></g><rect x="356.6" y="165.7" width="8" height="8.3" fill="#f4f7fa" stroke="#6f8399" stroke-width="1"/><rect x="363.4" y="171.4" width="8" height="9" fill="#f4f7fa" stroke="#6f8399" stroke-width="1"/><g stroke="#9fb0c2" stroke-width="0.8"><line x1="358" y1="168" x2="363" y2="168"/><line x1="365" y1="175" x2="370" y2="175"/><line x1="365" y1="177" x2="370" y2="177"/></g><path d="M359.5 170 L362 170 L362 173.5 L365 173.5 L365 171.5 L368.5 175 L365 178.5 L365 176.5 L359.5 176.5 Z" fill="#35d07a" stroke="#1f9a4f" stroke-width="0.7"/><g fill="#a8a8a8"><rect x="886" y="819.3" width="8.8" height="1.2"/><polygon points="886,824.6 894.8,824.6 890.4,820.4"/><polygon points="910,824.6 919,824.6 914.5,820.4"/></g><g fill="#333"><polygon points="933.9,819.8 943.2,819.8 938.5,825"/><polygon points="958,819.8 966.9,819.8 962.4,824.4"/><rect x="958" y="825" width="8.9" height="1.1"/></g><g stroke="#444" stroke-width="1.3" fill="none"><line x1="524.5" y1="205" x2="524.5" y2="214.3"/><path d="M522.1 212.1 L524.5 214.6 L526.9 212.1"/></g></svg></body></html>
